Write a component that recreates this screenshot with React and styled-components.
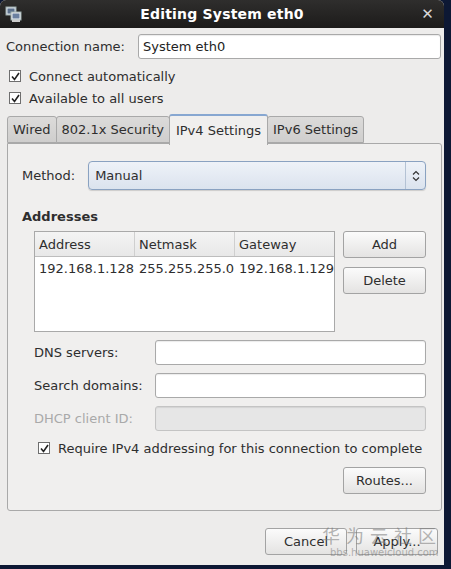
import React from "react"
import styled, { createGlobalStyle } from "styled-components"

const Global = createGlobalStyle`
  html, body {
    margin: 0;
    padding: 0;
    background: #0d1834;
    font-family: "DejaVu Sans", "Noto Sans", sans-serif;
    font-size: 13px;
    color: #2e2e2e;
  }
`

const Window = styled.div`
  position: relative;
  width: 444px;
  height: 565px;
  background: #edeceb;
  border-radius: 6px 6px 0 0;
  overflow: hidden;
  display: flex;
  flex-direction: column;
`

const TitleBar = styled.div`
  height: 28px;
  flex: none;
  background: linear-gradient(#2f2e2d, #1c1b1a);
  display: flex;
  align-items: center;
  justify-content: center;
  position: relative;
  color: #fff;
  font-weight: bold;
  font-size: 14px;
  letter-spacing: 0.2px;
`

const TitleIcon = styled.svg`
  position: absolute;
  left: 5px;
  top: 6px;
`

const CloseX = styled.span`
  position: absolute;
  right: 10px;
  top: 5px;
  font-size: 15px;
  color: #d8d8d8;
`

const Body = styled.div`
  padding: 6px 3px 0 6px;
  display: flex;
  flex-direction: column;
  flex: 1;
`

const NameRow = styled.div`
  display: flex;
  align-items: center;
  height: 25px;
  gap: 13px;
`

const Input = styled.div`
  flex: 1;
  height: 25px;
  box-sizing: border-box;
  border: 1px solid ${p => (p.disabled ? "#c4c4c4" : "#a9a9a9")};
  border-radius: 3px;
  background: ${p => (p.disabled ? "#e6e6e6" : "#fff")};
  box-shadow: inset 0 1px 1px rgba(0,0,0,0.08);
  display: flex;
  align-items: center;
  padding-left: 4px;
  color: #222;
`

const CheckRow = styled.label`
  display: flex;
  align-items: center;
  gap: 8px;
  height: 22px;
  padding-left: ${p => p.indent || 3}px;
`

const Box = styled.span`
  width: 10px;
  height: 10px;
  border: 1px solid #6e6e6e;
  background: #fff;
  display: flex;
  align-items: center;
  justify-content: center;
`

const Tabs = styled.div`
  display: flex;
  align-items: flex-end;
  margin-top: 5px;
  margin-left: 1px;
  height: 29px;
  position: relative;
  z-index: 2;
`

const Tab = styled.div`
  box-sizing: border-box;
  height: ${p => (p.active ? 31 : 27)}px;
  padding: 0 ${p => (p.active ? 6 : 5)}px;
  margin-bottom: ${p => (p.active ? -2 : 0)}px;
  display: flex;
  align-items: center;
  border: 1px solid #a9a9a9;
  border-bottom: ${p => (p.active ? "none" : "1px solid #a9a9a9")};
  border-top: ${p => (p.active ? "2px solid #87a7d1" : "1px solid #a9a9a9")};
  border-radius: 3px 3px 0 0;
  background: ${p => (p.active ? "#f0efee" : "linear-gradient(#dcdbda, #cfcecd)")};
  color: #2e2e2e;
  margin-right: -1px;
`

const Panel = styled.div`
  box-sizing: border-box;
  width: 435px;
  height: 368px;
  margin-left: 1px;
  border: 1px solid #a9a9a9;
  border-radius: 0 3px 3px 3px;
  background: #f0efee;
  padding: 17px 15px 0 14px;
  display: flex;
  flex-direction: column;
`

const MethodRow = styled.div`
  display: flex;
  align-items: center;
  gap: 13px;
`

const Select = styled.div`
  flex: 1;
  height: 29px;
  box-sizing: border-box;
  border: 1px solid #8aa2c1;
  border-radius: 4px;
  background: linear-gradient(#eef2f8, #dbe3ee);
  display: flex;
  align-items: center;
  padding-left: 6px;
  box-shadow: 0 1px 1px rgba(0,0,0,0.15);
`

const SelectArrow = styled.span`
  margin-left: auto;
  width: 19px;
  height: 100%;
  border-left: 1px solid #b4c2d4;
  display: flex;
  align-items: center;
  justify-content: center;
`

const Heading = styled.div`
  font-weight: bold;
  margin-top: 19px;
`

const AddrSection = styled.div`
  display: flex;
  gap: 8px;
  margin-top: 7px;
  padding-left: 12px;
`

const Table = styled.div`
  width: 301px;
  height: 101px;
  box-sizing: border-box;
  border: 1px solid #a9a9a9;
  background: #fff;
`

const TRow = styled.div`
  display: grid;
  grid-template-columns: 100px 100px 1fr;
  height: ${p => (p.head ? 24 : 22)}px;
  align-items: center;
  background: ${p => (p.head ? "linear-gradient(#f4f4f4, #e8e8e8)" : "#fff")};
  border-bottom: ${p => (p.head ? "1px solid #bdbdbd" : "none")};
`

const Cell = styled.span`
  padding-left: 4px;
  white-space: nowrap;
  height: 100%;
  display: flex;
  align-items: center;
  border-right: ${p => (p.divider ? "1px solid #cfcfcf" : "none")};
`

const ButtonCol = styled.div`
  display: flex;
  flex-direction: column;
  gap: 9px;
`

const Button = styled.div`
  box-sizing: border-box;
  width: ${p => p.w || 83}px;
  height: 27px;
  border: 1px solid #a3a3a3;
  border-radius: 3px;
  background: linear-gradient(#fbfbfb, #e4e3e2);
  display: flex;
  align-items: center;
  justify-content: center;
  color: #2e2e2e;
`

const Form = styled.div`
  display: grid;
  grid-template-columns: 121px 271px;
  row-gap: 8px;
  margin-top: 8px;
  padding-left: 12px;
  align-items: center;
`

const FieldLabel = styled.span`
  color: ${p => (p.disabled ? "#a9a9a9" : "#2e2e2e")};
`

const RoutesRow = styled.div`
  display: flex;
  justify-content: flex-end;
  margin-top: 8px;
`

const Footer = styled.div`
  display: flex;
  justify-content: flex-end;
  gap: 9px;
  margin-top: 17px;
  padding-right: 3px;
`

const Watermark = styled.div`
  position: absolute;
  left: 322px;
  top: 524px;
  color: rgba(120, 120, 120, 0.55);
  pointer-events: none;
  white-space: nowrap;
`

const WmCn = styled.div`
  font-family: "Noto Sans CJK SC", sans-serif;
  font-size: 18px;
  letter-spacing: 6px;
  line-height: 22px;
`

const WmUrl = styled.div`
  font-size: 10px;
  line-height: 10px;
  margin-top: 2px;
  padding-left: 8px;
`

const Check = () => (
  <Box>
    <svg width="9" height="9" viewBox="0 0 9 9">
      <path d="M1 4.5 L3.5 7.5 L8 1" stroke="#222" strokeWidth="1.6" fill="none" />
    </svg>
  </Box>
)

export default function App() {
  return (
    <>
      <Global />
      <Window>
        <TitleBar>
          <TitleIcon width="18" height="17" viewBox="0 0 18 17">
            <rect x="1" y="1" width="10" height="8" fill="#dde3ea" stroke="#9aa" />
            <rect x="2.5" y="2.5" width="7" height="5" fill="#5a6f8a" />
            <rect x="6" y="6" width="10" height="8" fill="#eef0f3" stroke="#9aa" />
            <rect x="7.5" y="7.5" width="7" height="5" fill="#6a80a0" />
            <rect x="7" y="14" width="8" height="2" fill="#ccc" />
          </TitleIcon>
          Editing System eth0
          <CloseX>✕</CloseX>
        </TitleBar>
        <Body>
          <NameRow>
            <span>Connection name:</span>
            <Input>System eth0</Input>
          </NameRow>
          <CheckRow style={{ marginTop: 6 }}>
            <Check />
            Connect automatically
          </CheckRow>
          <CheckRow>
            <Check />
            Available to all users
          </CheckRow>
          <Tabs>
            <Tab>Wired</Tab>
            <Tab>802.1x Security</Tab>
            <Tab active>IPv4 Settings</Tab>
            <Tab>IPv6 Settings</Tab>
          </Tabs>
          <Panel>
            <MethodRow>
              <span>Method:</span>
              <Select>
                Manual
                <SelectArrow>
                  <svg width="8" height="12" viewBox="0 0 8 12">
                    <path d="M1 4.5 L4 1.5 L7 4.5 M1 7.5 L4 10.5 L7 7.5" stroke="#333" strokeWidth="1.2" fill="none" />
                  </svg>
                </SelectArrow>
              </Select>
            </MethodRow>
            <Heading>Addresses</Heading>
            <AddrSection>
              <Table>
                <TRow head>
                  <Cell divider>Address</Cell>
                  <Cell divider>Netmask</Cell>
                  <Cell>Gateway</Cell>
                </TRow>
                <TRow>
                  <Cell>192.168.1.128</Cell>
                  <Cell>255.255.255.0</Cell>
                  <Cell>192.168.1.129</Cell>
                </TRow>
              </Table>
              <ButtonCol>
                <Button>Add</Button>
                <Button>Delete</Button>
              </ButtonCol>
            </AddrSection>
            <Form>
              <FieldLabel>DNS servers:</FieldLabel>
              <Input />
              <FieldLabel>Search domains:</FieldLabel>
              <Input />
              <FieldLabel disabled>DHCP client ID:</FieldLabel>
              <Input disabled />
            </Form>
            <CheckRow indent={16} style={{ marginTop: 6 }}>
              <Check />
              Require IPv4 addressing for this connection to complete
            </CheckRow>
            <RoutesRow>
              <Button>Routes...</Button>
            </RoutesRow>
          </Panel>
          <Footer>
            <Button w={82}>Cancel</Button>
            <Button w={82}>Apply...</Button>
          </Footer>
        </Body>
        <Watermark>
          <WmCn>华为云社区</WmCn>
          <WmUrl>bbs.huaweicloud.com</WmUrl>
        </Watermark>
      </Window>
    </>
  )
}
